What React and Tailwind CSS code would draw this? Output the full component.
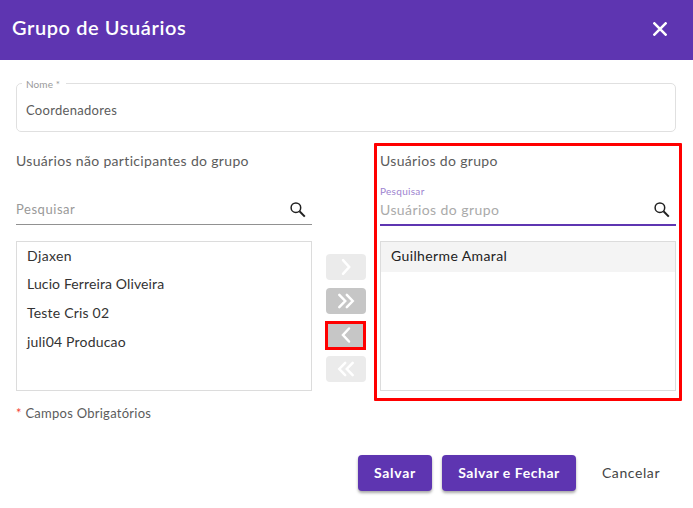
const available = [
  { name: "Djaxen", spacing: "tracking-[0.4px]" },
  { name: "Lucio Ferreira Oliveira", spacing: "tracking-[0.12px]" },
  { name: "Teste Cris 02", spacing: "tracking-[0.2px]" },
  { name: "juli04 Producao", spacing: "tracking-[0.2px]" },
];

function SearchIcon() {
  return (
    <svg viewBox="0 0 20 20" className="mr-1 size-5 shrink-0 fill-none stroke-[#212121]">
      <circle cx="7.9" cy="7.7" r="4.8" strokeWidth="1.5" />
      <path d="M11.5 11.3 16.8 16.6" strokeWidth="2" />
    </svg>
  );
}

function MoveButton({ d, disabled, label }) {
  return (
    <button
      aria-label={label}
      className={`flex h-[26px] w-10 items-center justify-center rounded-[4px] ${disabled ? "bg-[#ebebeb]" : "bg-[#c6c6c6]"}`}
    >
      <svg viewBox="0 0 20 20" className="size-5 fill-none stroke-white stroke-[2.5]" strokeLinecap="round">
        <path d={d} />
      </svg>
    </button>
  );
}

export default function App() {
  return (
    <div className="flex h-[508px] w-[693px] flex-col overflow-hidden bg-white font-['Lato',sans-serif] text-[#5c5c5c]">
      <header className="flex h-[60px] shrink-0 items-center justify-between bg-[#5e35b1] pr-[26px] pl-3 text-white">
        <h1 className="pb-[6px] text-[20px] leading-6 font-semibold whitespace-nowrap tracking-[0.58px]">Grupo de Usuários</h1>
        <svg viewBox="0 0 14 14" className="mt-[-2px] size-[14px] fill-none stroke-white stroke-[2.5]">
          <path d="M.5.5 13.5 13.5M13.5.5.5 13.5" />
        </svg>
      </header>

      <main className="px-4 pt-[18px]">
        <fieldset className="h-[54px] w-[660px] rounded-[5px] border border-[#e0e0e0] pl-[5px]">
          <legend className="h-[11px] w-[44px] pl-1 text-[10px] leading-[13px] whitespace-nowrap tracking-[0.1px] text-[#999]">Nome *</legend>
          <div className="pt-[12px] pl-1 text-[13px] leading-[18px] tracking-[0.3px]">Coordenadores</div>
        </fieldset>

        <div className="flex">
          <section className="w-[296px] pt-[19px]">
            <h2 className="h-5 text-[14px] leading-5 whitespace-nowrap tracking-[0.33px]">Usuários não participantes do grupo</h2>
            <div className="mt-[14px] flex h-[40px] items-center justify-between border-b border-[#919191] pt-[10px]">
              <span className="pt-px text-[13px] tracking-[0.55px] text-[#999]">Pesquisar</span>
              <SearchIcon />
            </div>
            <ul className="mt-4 h-[150px] border border-[#dcdcdc] text-[14px] text-[#333]">
              {available.map((user) => (
                <li key={user.name} className={`flex h-[28.6px] items-center pb-[2px] pl-[10px] whitespace-nowrap ${user.spacing}`}>{user.name}</li>
              ))}
            </ul>
          </section>

          <div className="flex w-[68px] flex-col items-center gap-2 pt-[122px]">
            <MoveButton label="Adicionar" disabled d="M7 3.2 13.2 10 7 16.8" />
            <MoveButton label="Adicionar todos" d="M3.3 3.9 9.2 10 3.3 16.1M10.8 3.9 16.7 10 10.8 16.1" />
            <div className="relative">
              <MoveButton label="Remover" d="M13 3.5 7 10 13 16.5" />
              <span className="absolute -top-px -left-px h-[29px] w-[41px] border-[3px] border-[#f00]" />
            </div>
            <MoveButton label="Remover todos" disabled d="M9.2 3.9 3.3 10 9.2 16.1M16.7 3.9 10.8 10 16.7 16.1" />
          </div>

          <section className="relative w-[296px] pt-[19px]">
            <h2 className="h-5 text-[14px] leading-5 whitespace-nowrap tracking-[0.33px]">Usuários do grupo</h2>
            <div className="mt-[14px] h-[41px] border-b-2 border-[#5e35b1]">
              <div className="h-[10px] text-[10px] leading-[13px] tracking-[0.3px] text-[#9d83d0]">Pesquisar</div>
              <div className="flex h-[29px] items-center justify-between">
                <span className="text-[14px] tracking-[0.42px] text-[#aaa]">Usuários do grupo</span>
                <SearchIcon />
              </div>
            </div>
            <ul className="mt-[15px] h-[150px] border border-[#dcdcdc] text-[14px] text-[#222]">
              <li className="flex h-[30px] items-center bg-[#f4f4f4] pb-[3px] pl-[10px] whitespace-nowrap tracking-[0.38px]">Guilherme Amaral</li>
            </ul>
            <span className="pointer-events-none absolute top-[11px] -left-[6px] h-[258px] w-[308px] rounded-[1px] border-[3px] border-[#f00]" />
          </section>
        </div>

        <p className="mt-[12px] text-[13px] leading-5 tracking-[0.26px]"><span className="text-[#f44336]">*</span> Campos Obrigatórios</p>
      </main>

      <footer className="mt-[32px] flex h-9 pl-[358px] text-[14px] whitespace-nowrap">
        <button className="h-9 w-[74px] rounded-[4px] bg-[#5e35b1] pb-[2px] font-bold tracking-[0.7px] text-white shadow-[0_2px_3px_rgba(0,0,0,0.35)]">Salvar</button>
        <button className="ml-[10px] h-9 w-[134px] rounded-[4px] bg-[#5e35b1] pb-[2px] font-bold tracking-[0.55px] text-white shadow-[0_2px_3px_rgba(0,0,0,0.35)]">Salvar e Fechar</button>
        <button className="ml-[10px] h-9 w-[90px] pb-[2px] tracking-[0.6px] text-[#444]">Cancelar</button>
      </footer>
    </div>
  );
}
